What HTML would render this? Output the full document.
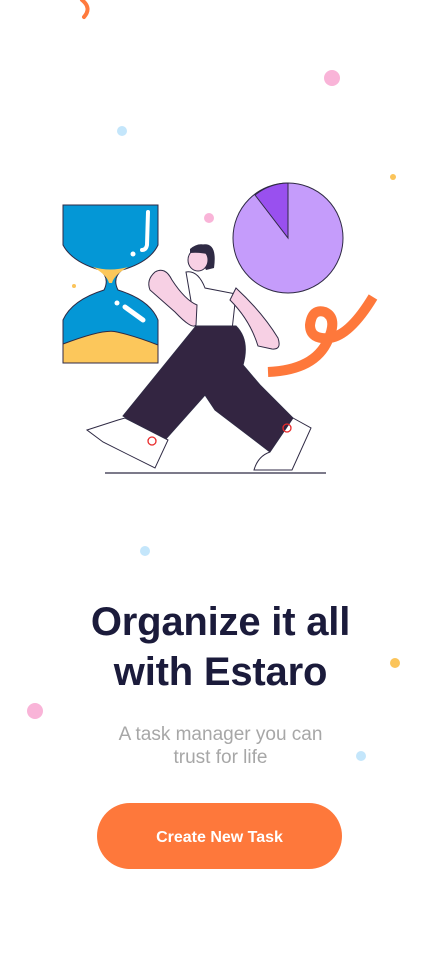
<!DOCTYPE html>
<html><head><style>
html,body{margin:0;padding:0;background:#fff;}
body{width:441px;height:955px;position:relative;overflow:hidden;font-family:"Liberation Sans",sans-serif;}
h1{position:absolute;top:597px;left:0;width:441px;margin:0;text-align:center;font-size:40px;line-height:50px;font-weight:bold;color:#1b1b3b;letter-spacing:-0.2px;}
.sub{position:absolute;top:723px;left:0;width:441px;text-align:center;font-size:19px;line-height:23px;color:#a7a7a7;}
.btn{position:absolute;left:97px;top:803px;width:245px;height:66px;border-radius:33px;background:#fe783b;color:#fff;font-size:16px;font-weight:bold;text-align:center;line-height:70px;}
</style></head><body>
<svg width="441" height="955" style="position:absolute;left:0;top:0">
<path d="M82 0 Q92 8 84 17" stroke="#ff7a3d" stroke-width="4" fill="none" stroke-linecap="round"/>
<circle cx="332" cy="78" r="8" fill="#f9b4d8"/>
<circle cx="122" cy="131" r="5" fill="#c4e6fb"/>
<circle cx="393" cy="177" r="3" fill="#fbc45a"/>
<circle cx="209" cy="218" r="5" fill="#f9b4d8"/>
<circle cx="74" cy="286" r="2" fill="#fbc45a"/>
<circle cx="145" cy="551" r="5" fill="#c4e6fb"/>
<circle cx="395" cy="663" r="5" fill="#fbc45a"/>
<circle cx="35" cy="711" r="8" fill="#f9b4d8"/>
<circle cx="361" cy="756" r="5" fill="#c4e6fb"/>
<!-- hourglass -->
<path d="M63 205 H158 V245 Q150 262 122 270 Q112 278 118 290 Q150 300 158 320 V363 H63 V320 Q72 300 104 290 Q110 278 100 270 Q72 262 63 245 Z" fill="#0497d6" stroke="#2f2a44" stroke-width="1"/>
<path d="M93 267 Q110 272 128 267 Q114 275 112 283 L109 283 Q107 275 93 267 Z" fill="#fcc75b"/>
<path d="M63 344 Q105 328 117 332 Q135 336 158 345 V363 H63 Z" fill="#fcc75b" stroke="#2f2a44" stroke-width="1"/>
<path d="M148 212 L147 245 Q146 250 142 250" stroke="#fff" stroke-width="4" fill="none" stroke-linecap="round"/>
<circle cx="133" cy="254" r="2.5" fill="#fff"/>
<circle cx="117" cy="303" r="2.5" fill="#fff"/>
<path d="M125 307 L143 320" stroke="#fff" stroke-width="5" stroke-linecap="round"/>
<!-- pie -->
<circle cx="288" cy="238" r="55" fill="#c59cfb" stroke="#2f2a44" stroke-width="1"/>
<path d="M288 238 L288 183 A55 55 0 0 0 255 195 Z" fill="#9950ef" stroke="#2f2a44" stroke-width="1"/>
<!-- squiggle -->
<path d="M373 297 Q350 335 330 338 Q310 340 310 325 Q312 308 325 312 Q338 318 328 340 Q315 370 268 372" stroke="#fe783b" stroke-width="10" fill="none"/>
<!-- person -->
<path d="M186 272 Q198 270 205 288 L236 294 L232 330 L196 330 Z" fill="#fff" stroke="#2f2a44" stroke-width="1"/>
<path d="M155 272 Q146 280 150 290 L175 312 Q192 330 196 325 L197 305 Q185 300 172 280 Q165 266 155 272Z" fill="#f7d0e4" stroke="#2f2a44" stroke-width="1"/>
<path d="M230 300 L236 288 Q262 312 278 338 Q282 350 272 349 L258 346 Q250 320 230 300Z" fill="#f7d0e4" stroke="#2f2a44" stroke-width="1"/>
<path d="M200 245 Q218 240 214 268 L206 270 Q204 265 200 262 Z" fill="#2f2a44"/>
<ellipse cx="198" cy="260" rx="10" ry="11" fill="#f7d0e4" stroke="#2f2a44" stroke-width="1"/>
<path d="M190 249 Q200 240 212 248 L212 255 Q200 252 190 253Z" fill="#2f2a44"/>
<path d="M196 326 L236 326 Q250 340 243 365 L260 385 L293 418 L270 452 L215 410 L205 395 L165 440 L123 416 Z" fill="#332541" stroke="#2f2a44" stroke-width="1"/>
<path d="M87 430 L118 420 L125 418 L168 440 L155 468 L103 442 Z" fill="#fff" stroke="#2f2a44" stroke-width="1"/>
<circle cx="152" cy="441" r="4" fill="none" stroke="#e92a2a" stroke-width="1.3"/>
<path d="M293 418 L311 428 L292 470 L254 470 Q258 456 270 452 Z" fill="#fff" stroke="#2f2a44" stroke-width="1"/>
<circle cx="287" cy="428" r="4" fill="none" stroke="#e92a2a" stroke-width="1.3"/>
<path d="M105 473 H326" stroke="#2f2a44" stroke-width="1.2"/>
</svg>
<h1>Organize it all<br>with Estaro</h1>
<div class="sub">A task manager you can<br>trust for life</div>
<div class="btn">Create New Task</div>
</body></html>
